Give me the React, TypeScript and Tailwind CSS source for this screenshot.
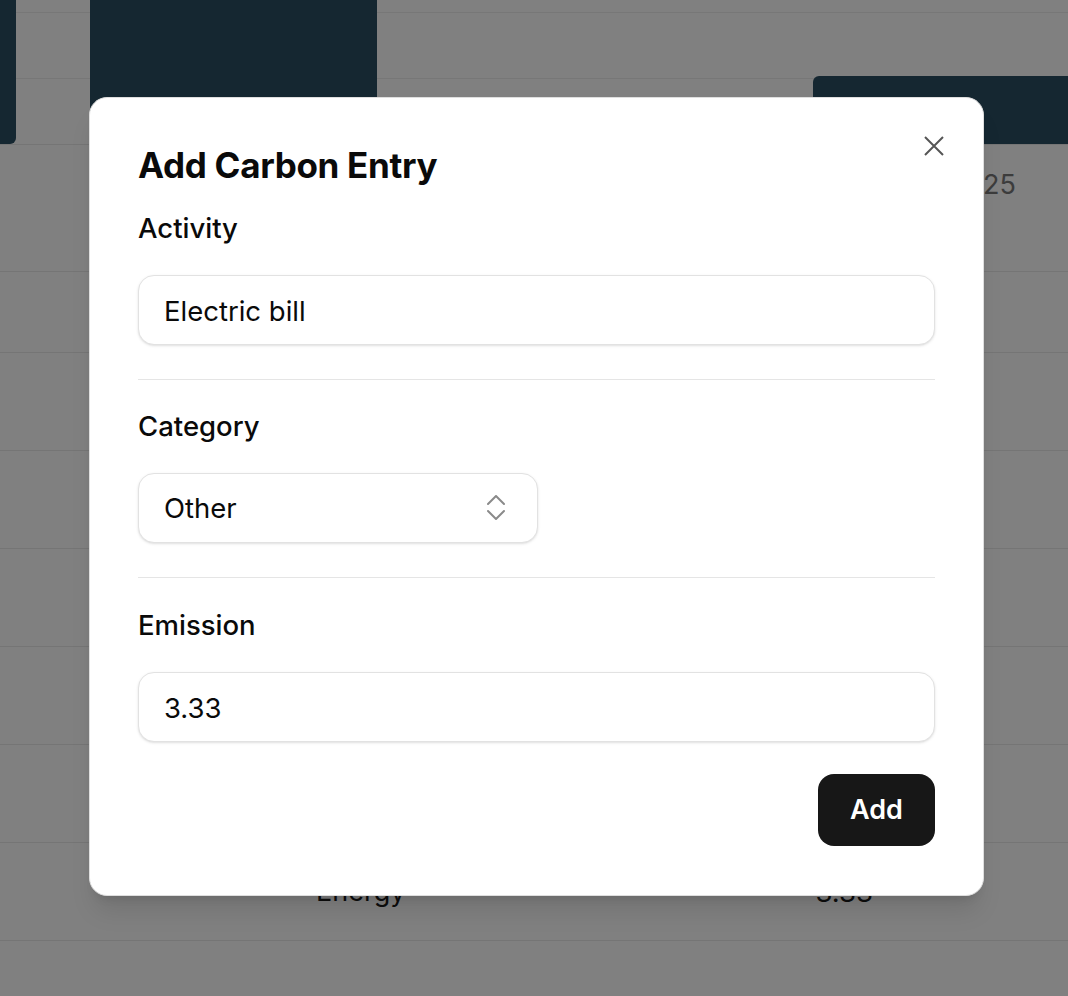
import React from "react";

const rows = [
  { h: "h-[81px]" },
  { h: "h-[98px]" },
  { h: "h-[98px]" },
  { h: "h-[98px]" },
  { h: "h-[98px]" },
  { h: "h-[98px]" },
];

function Background() {
  return (
    <div className="w-[1068px] h-[996px] overflow-hidden bg-[#808080] font-['Inter',sans-serif]">
      {/* chart area */}
      <div className="relative h-[145px] border-b border-[#757575]">
        <div className="absolute left-0 right-0 top-[12px] h-px bg-[#777777]" />
        <div className="absolute left-0 right-0 top-[78px] h-px bg-[#777777]" />
        <div className="relative flex h-full items-end">
          <div className="w-[16px] h-[144px] bg-[#152731] rounded-br-md" />
          <div className="ml-[74px] w-[287px] h-[144px] bg-[#152731]" />
          <div className="ml-[436px] flex-1 h-[68px] bg-[#152731] rounded-tl-md" />
        </div>
      </div>
      {/* summary area */}
      <div className="h-[127px] border-b border-[#757575] flex justify-end pr-[52px] pt-[22px]">
        <span className="text-[27px] leading-[36px] text-[#3c3c3c]">Jan 1, 2025</span>
      </div>
      {rows.map((r, i) => (
        <div key={i} className={`${r.h} border-b border-[#757575]`} />
      ))}
      <div className="h-[98px] border-b border-[#757575] flex items-center">
        <span className="ml-[316px] text-[27px] leading-[36px] text-[#0d0d0d]">Energy</span>
        <span className="ml-[410px] text-[27.5px] leading-[36px] text-[#0d0d0d]">3.33</span>
      </div>
      <div className="h-[60px]" />
    </div>
  );
}

function Field({ label, value }: { label: string; value: string }) {
  return (
    <div className="flex flex-col">
      <label className="text-[27.5px] leading-[36px] font-medium text-[#0a0a0a]">{label}</label>
      <div className="mt-[29px] h-[70px] rounded-2xl border-[1.5px] border-[#e2e2e2] bg-white shadow-sm flex items-center px-[25px] pt-[3px]">
        <span className="text-[27.5px] text-[#0a0a0a]">{value}</span>
      </div>
    </div>
  );
}

export default function App() {
  return (
    <div className="relative w-[1068px] h-[996px] overflow-hidden">
      <Background />
      <div className="absolute left-[89px] top-[97px] w-[895px] h-[799px] rounded-[18px] border border-[#dedede] bg-white shadow-xl px-[48px] pt-[47px] font-['Inter',sans-serif]">
        <button className="absolute right-[39px] top-[38px] w-[20px] h-[20px]">
          <svg width="20" height="20" viewBox="0 0 20 20" fill="none" stroke="#555555" strokeWidth="2" strokeLinecap="butt">
            <path d="M1 1 L19 19 M19 1 L1 19" />
          </svg>
        </button>
        <h2 className="text-[35px] leading-[40px] font-bold text-[#0a0a0a] tracking-[-0.3px]">Add Carbon Entry</h2>
        <div className="mt-[25px]">
          <Field label="Activity" value="Electric bill" />
        </div>
        <div className="mt-[34px] h-px bg-[#e5e5e5]" />
        <div className="mt-[28px] flex flex-col">
          <label className="text-[27.5px] leading-[36px] font-medium text-[#0a0a0a]">Category</label>
          <div className="mt-[29px] w-[400px] h-[70px] rounded-2xl border-[1.5px] border-[#e2e2e2] bg-white shadow-sm flex items-center justify-between pl-[25px] pr-[32px]">
            <span className="pt-[2px] text-[27.5px] text-[#0a0a0a]">Other</span>
            <svg width="18" height="26" viewBox="0 0 18 26" fill="none" stroke="#8a8a8a" strokeWidth="2" strokeLinecap="round" strokeLinejoin="round">
              <path d="M1 9 L9 1 L17 9" />
              <path d="M1 16 L9 24 L17 16" />
            </svg>
          </div>
        </div>
        <div className="mt-[34px] h-px bg-[#e5e5e5]" />
        <div className="mt-[29px]">
          <Field label="Emission" value="3.33" />
        </div>
        <div className="mt-[32px] flex justify-end">
          <button className="w-[117px] h-[72px] rounded-2xl bg-[#171717] text-white text-[27px] font-semibold">Add</button>
        </div>
      </div>
    </div>
  );
}
